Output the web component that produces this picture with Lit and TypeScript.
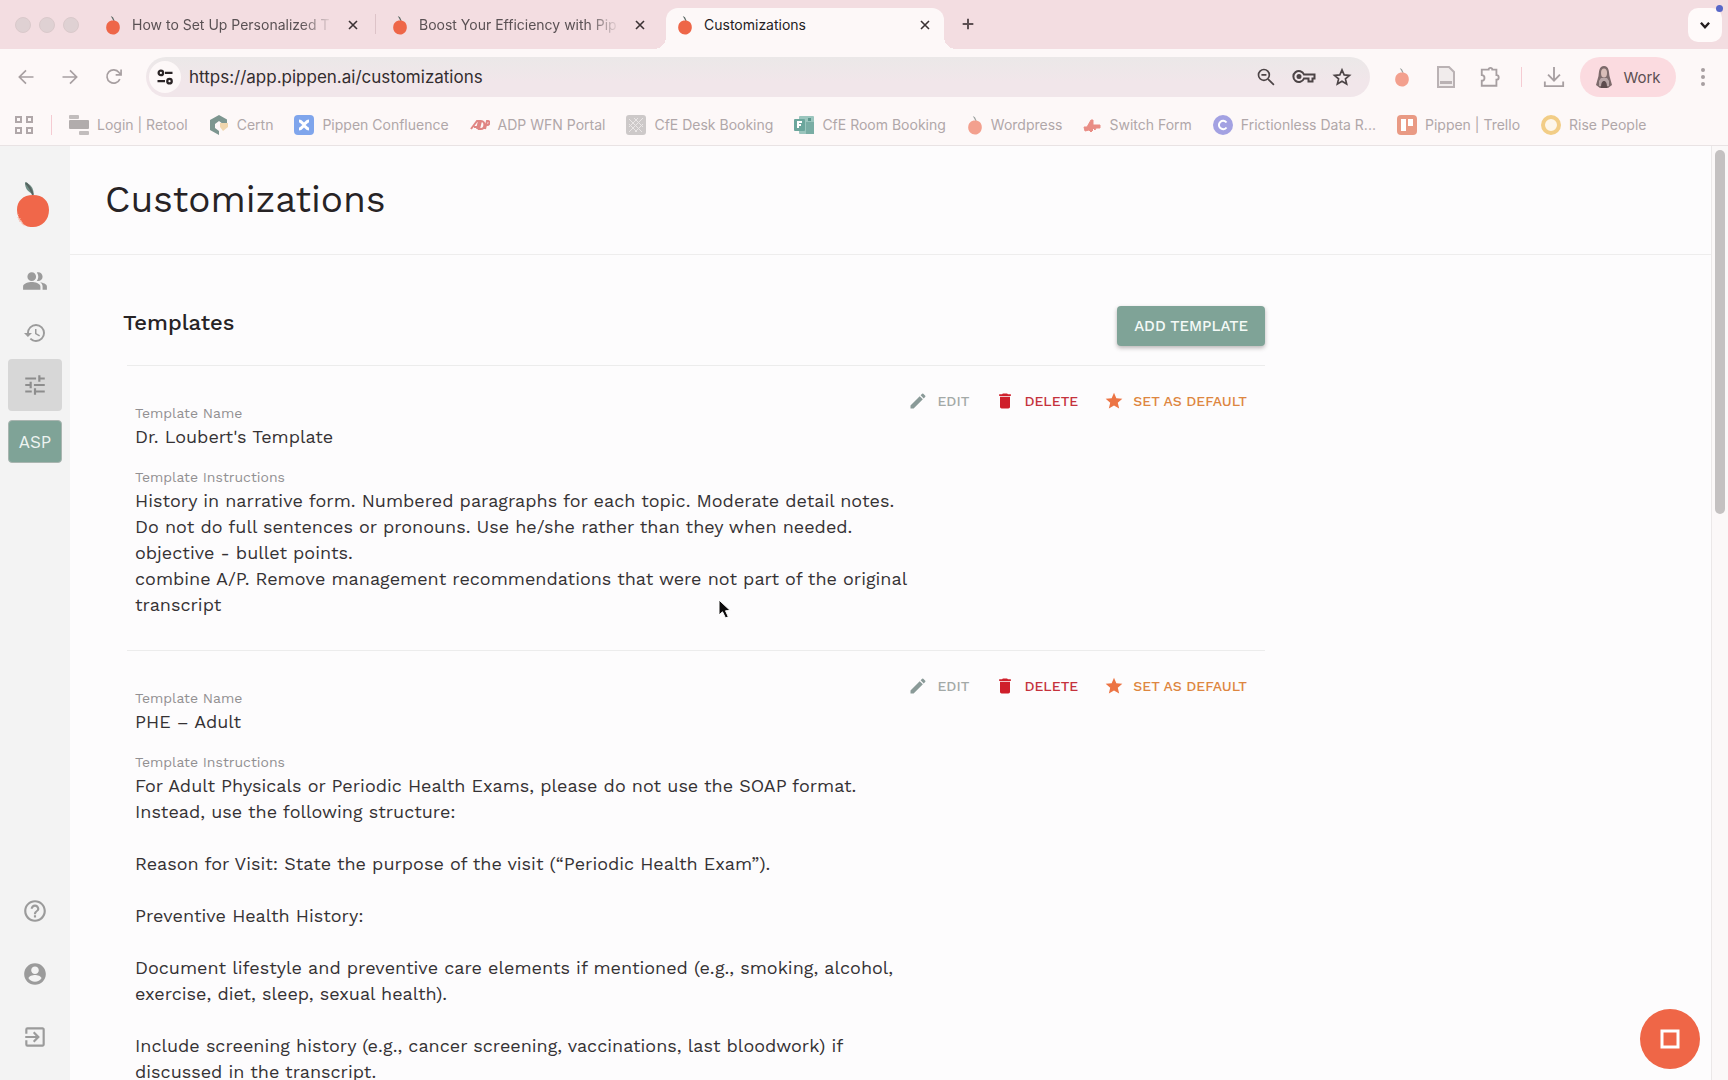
import { LitElement, html, css, svg } from "lit";
import { customElement, property } from "lit/decorators.js";

const fruit = (dim = false) => svg`
  <svg width="16" height="20" viewBox="0 0 16 20" opacity=${dim ? 0.6 : 1} aria-hidden="true">
    <path d="M8.500 6 5.800 1 8 2.200l1.600 3.600z" fill="#5d6a66"/>
    <path d="M8 5.600c4.200 0 6.800 2.600 6.800 6.600 0 4.200-3 7.300-6.800 7.300s-6.800-3-6.800-7C1.200 8.300 4 5.600 8 5.600z" fill="#ee6648"/>
  </svg>`;

const closeIcon = svg`
  <svg width="12" height="12" viewBox="0 0 12 12" aria-hidden="true">
    <path d="M2 2l8 8M10 2l-8 8" stroke="currentColor" stroke-width="1.600" fill="none"/>
  </svg>`;

const mui = (d: string, size = 24) => svg`
  <svg width=${size} height=${size} viewBox="0 0 24 24" fill="currentColor" aria-hidden="true"><path d=${d}/></svg>`;

const paths = {
  people:
    "M16.670 13.130C18.040 14.060 19 15.320 19 17v3h4v-3c0-2.180-3.570-3.470-6.330-3.870zM15 12c2.210 0 4-1.790 4-4s-1.790-4-4-4c-.47 0-.91.1-1.330.24C14.500 5.270 15 6.580 15 8s-.5 2.730-1.330 3.760c.42.14.86.24 1.330.24zM9 12c2.210 0 4-1.790 4-4s-1.790-4-4-4-4 1.790-4 4 1.790 4 4 4zm0 1c-2.670 0-8 1.340-8 4v3h16v-3c0-2.660-5.330-4-8-4z",
  history:
    "M13 3a9 9 0 0 0-9 9H1l3.890 3.890.07.14L9 12H6c0-3.870 3.130-7 7-7s7 3.130 7 7-3.130 7-7 7c-1.930 0-3.680-.79-4.940-2.060l-1.420 1.420A8.954 8.954 0 0 0 13 21a9 9 0 0 0 0-18zm-1 5v5l4.280 2.540.72-1.210-3.500-2.080V8H12z",
  tune: "M3 17v2h6v-2H3zM3 5v2h10V5H3zm10 16v-2h8v-2h-8v-2h-2v6h2zM7 9v2H3v2h4v2h2V9H7zm14 4v-2H11v2h10zm-6-4h2V7h4V5h-4V3h-2v6z",
  help: "M11 18h2v-2h-2v2zm1-16C6.480 2 2 6.480 2 12s4.480 10 10 10 10-4.480 10-10S17.520 2 12 2zm0 18c-4.410 0-8-3.590-8-8s3.590-8 8-8 8 3.590 8 8-3.590 8-8 8zm0-14c-2.210 0-4 1.790-4 4h2c0-1.100.9-2 2-2s2 .9 2 2c0 2-3 1.750-3 5h2c0-2.250 3-2.500 3-5 0-2.210-1.790-4-4-4z",
  account:
    "M12 2C6.480 2 2 6.480 2 12s4.480 10 10 10 10-4.480 10-10S17.520 2 12 2zm0 3c1.930 0 3.500 1.570 3.500 3.500S13.930 12 12 12s-3.500-1.570-3.500-3.500S10.070 5 12 5zm0 14.200c-2.500 0-4.710-1.280-6-3.220.03-1.990 4-3.080 6-3.080 1.990 0 5.970 1.090 6 3.080a7.190 7.190 0 0 1-6 3.220z",
  exit: "M10.090 15.590 11.500 17l5-5-5-5-1.410 1.410L12.670 11H3v2h9.670l-2.580 2.590zM19 3H5a2 2 0 0 0-2 2v4h2V5h14v14H5v-4H3v4a2 2 0 0 0 2 2h14c1.100 0 2-.9 2-2V5c0-1.100-.9-2-2-2z",
  edit: "M3 17.250V21h3.750L17.810 9.940l-3.750-3.750L3 17.250zM20.710 7.040a.996.996 0 0 0 0-1.410l-2.340-2.340a.996.996 0 0 0-1.410 0l-1.830 1.830 3.750 3.750 1.830-1.830z",
  trash: "M6 19c0 1.100.9 2 2 2h8c1.100 0 2-.9 2-2V7H6v12zM19 4h-3.500l-1-1h-5l-1 1H5v2h14V4z",
  star: "M12 17.270 18.180 21l-1.640-7.030L22 9.240l-7.190-.61L12 2 9.190 8.630 2 9.240l5.460 4.730L5.820 21z",
};

const line = (content: unknown, w = 24, sw = 2) => svg`
  <svg width=${w} height=${w} viewBox="0 0 24 24" fill="none" stroke="currentColor" stroke-width=${sw} aria-hidden="true">${content}</svg>`;

const bookmarkIcons: Record<string, unknown> = {
  retool: svg`<svg width="20" height="20" viewBox="0 0 20 20"><rect y="0" width="10" height="4" rx="1" fill="#c2bdbd"/><rect y="5" width="20" height="9" rx="1" fill="#b1acac"/><rect x="10" y="16" width="10" height="4" rx="1" fill="#c2bdbd"/></svg>`,
  certn: svg`<svg width="20" height="20" viewBox="0 0 20 20"><path d="M10 0 18 4.500V8l-4 1-4-3-4 3v4l4 3v4L1 15V5z" fill="#7d9690"/><path d="M11 8h8v4l-5 4-3-4z" fill="#f0d6ae"/></svg>`,
  confluence: svg`<svg width="20" height="20" viewBox="0 0 20 20"><rect width="20" height="20" rx="4" fill="#7fa5ec"/><path d="M5 6c3 0 3 3 5 3s2-3 5-3M5 14c3 0 3-3 5-3s2 3 5 3" stroke="#fff" stroke-width="3" fill="none"/></svg>`,
  adp: svg`<svg width="20" height="20" viewBox="0 0 20 20"><g fill="none" stroke="#e08583" stroke-width="2"><path d="M1 14 7 6h2l-2 8M4 12h4M11 6l-2 8h2c4 0 5-8 0-8zM15 14l2-8h1c2 0 2 4-1 4h-2"/></g></svg>`,
  desk: svg`<svg width="20" height="20" viewBox="0 0 20 20"><rect width="20" height="20" rx="3" fill="#cdc9c9"/><path d="M3 4l13 13M17 3 3 17M8 3l9 9M3 9l8 8M12 3 3 12M17 9l-8 8" stroke="#eae6e6" stroke-width="1"/></svg>`,
  room: svg`<svg width="20" height="20" viewBox="0 0 20 20"><rect x="5" y="1" width="15" height="18" rx="1" fill="#9ac5bd"/><rect x="12" y="7" width="8" height="12" fill="#79ada4"/><rect x="14" y="3" width="3" height="3" fill="#5c978d"/><rect y="4" width="11" height="12" rx="1" fill="#6ba69c"/><path d="M4 13V7h4M4 10h3" stroke="#fff" stroke-width="2" fill="none"/></svg>`,
  fruit: fruit(true),
  switch: svg`<svg width="18" height="20" viewBox="0 0 18 20"><path d="M1 12h3l4-7h2v5h7v3h-4l-1 2-2-2-1 1 1 1-2 2-2-2-4 1z" fill="#e98d85" stroke="#e98d85" stroke-width="1" stroke-linejoin="round"/></svg>`,
  frictionless: svg`<svg width="20" height="20" viewBox="0 0 20 20"><circle cx="10" cy="10" r="10" fill="#a3a1e2"/><path d="M13.500 7.500a4.200 4.200 0 1 0 0 5" stroke="#fff" stroke-width="2" fill="none"/></svg>`,
  trello: svg`<svg width="20" height="20" viewBox="0 0 20 20"><rect width="20" height="20" rx="4" fill="#e99a84"/><rect x="4" y="4" width="5" height="12" fill="#fff"/><rect x="11" y="4" width="5" height="7" fill="#fff"/></svg>`,
  rise: svg`<svg width="20" height="20" viewBox="0 0 20 20"><circle cx="10" cy="10" r="8" fill="#fdf6ea" stroke="#f2cd86" stroke-width="4"/></svg>`,
};

const bookmarks: [string, string][] = [
  ["retool", "Login | Retool"],
  ["certn", "Certn"],
  ["confluence", "Pippen Confluence"],
  ["adp", "ADP WFN Portal"],
  ["desk", "CfE Desk Booking"],
  ["room", "CfE Room Booking"],
  ["fruit", "Wordpress"],
  ["switch", "Switch Form"],
  ["frictionless", "Frictionless Data R..."],
  ["trello", "Pippen | Trello"],
  ["rise", "Rise People"],
];

const reset = css`
  * { box-sizing: border-box; }
  button, input { font: inherit; color: inherit; background: none; border: 0; padding: 0; margin: 0; }
  button { display: inline-flex; align-items: center; justify-content: center; }
  a { color: inherit; text-decoration: none; }
  svg { display: block; flex: none; }
`;

@customElement("browser-chrome")
class BrowserChrome extends LitElement {
  static styles = [reset, css`
    :host { display: block; font-family: Inter, "Liberation Sans", sans-serif; background: #fdf8f8; color: #5a5154; border-bottom: 1px solid #e9e3e4; }
    .strip { display: flex; align-items: flex-end; height: 49px; background: #f3dde1; padding: 0 6px 0 15px; }
    .lights { display: flex; gap: 8px; padding-bottom: 16px; width: 66px; margin-right: 8px; }
    .light { width: 16px; height: 16px; border-radius: 50%; background: #dfd1d3; border: 1px solid #dac9cb; }
    .tab { display: flex; align-items: center; height: 41px; padding: 0 14px 0 16px; position: relative; }
    .tab svg { margin-bottom: 7px; }
    .tab .close svg { margin: 0; }
    .title { display: block; flex: 1; text-align: left; font-size: 14px; line-height: 20px; white-space: nowrap; margin: 0 12px 8px 11px; }
    .fade { -webkit-mask-image: linear-gradient(90deg, #000 84%, transparent); mask-image: linear-gradient(90deg, #000 84%, transparent); }
    .close { margin-bottom: 8px; height: 20px; width: 16px; color: #3b3234; }
    .wide { width: 286px; }
    .rule { width: 1px; height: 20px; background: #ddc3c8; margin-bottom: 15px; }
    .active { width: 278px; background: #fdf8f8; border-radius: 12px 12px 0 0; padding: 0 11px; margin-left: 4px; color: #241d1f; }
    .active::before, .active::after { content: ""; position: absolute; bottom: 0; width: 12px; height: 12px; }
    .active::before { left: -12px; background: radial-gradient(circle at 0 0, transparent 12px, #fdf8f8 12px); }
    .active::after { right: -12px; background: radial-gradient(circle at 100% 0, transparent 12px, #fdf8f8 12px); }
    .plus { height: 49px; width: 48px; color: #5d5053; padding-bottom: 1px; }
    .grow { flex: 1; }
    .down { width: 34px; height: 34px; border-radius: 10px; background: #fffafa; color: #231c1e; margin-bottom: 7px; position: relative; }
    .down::after { content: ""; position: absolute; right: -1px; top: -3px; width: 7px; height: 7px; border-radius: 50%; background: #5867c8; }
    .bar { display: flex; align-items: center; height: 56px; padding: 0 13px; color: #a79fa1; }
    .nav { display: flex; gap: 18px; margin-right: 19px; }
    .nav button { width: 26px; height: 26px; }
    .address { flex: 1; display: flex; align-items: center; height: 40px; border-radius: 20px; background: linear-gradient(#ebe8e8, #f1e6ea 60%); padding: 0 16px 0 3px; gap: 8px; color: #4c4446; }
    .site { width: 32px; height: 32px; border-radius: 50%; background: #fdf8f8; color: #2b2426; }
    .url { flex: 1; min-width: 0; font-size: 17px; line-height: 24px; color: #332d2f; outline: none; }
    .inside { display: flex; gap: 14px; }
    .inside button { width: 24px; height: 24px; }
    .ext { display: flex; align-items: center; gap: 20px; margin-left: 20px; }
    .ext button { width: 24px; height: 24px; }
    .ext .pinkrule { margin: 0 0 0 -1px; }
    .pinkrule { width: 1px; height: 20px; background: #f5cbd2; }
    .ext .work { width: 96px; height: 40px; border-radius: 20px; background: #fbdbe0; gap: 10px; color: #5c5052; font-size: 15px; margin-left: -6px; margin-right: -5px; }
    .marks { display: flex; align-items: center; height: 40px; padding: 0 15px; font-size: 14px; line-height: 20px; color: #b0a7a9; white-space: nowrap; }
    .marks .pinkrule { margin: 0 17px 0 18px; }
    .links { display: flex; gap: 21px; }
    .link { display: flex; align-items: center; gap: 8px; }
  `];

  tab(title: string, cls: string, fade: boolean) {
    return html`
      <div class="tab ${cls}">
        ${fruit()}
        <button class="title ${fade ? "fade" : ""}" role="tab" aria-selected=${cls === "active" ? "true" : "false"}>${title}</button>
        <button class="close" aria-label="Close tab">${closeIcon}</button>
      </div>`;
  }

  render() {
    return html`
      <div class="strip" role="tablist">
        <div class="lights"><span class="light"></span><span class="light"></span><span class="light"></span></div>
        ${this.tab("How to Set Up Personalized T", "wide", true)}
        <span class="rule"></span>
        ${this.tab("Boost Your Efficiency with Pip", "wide", true)}
        ${this.tab("Customizations", "active", false)}
        <button class="plus" aria-label="New tab">${line(svg`<path d="M12 4v16M4 12h16"/>`, 16, 3)}</button>
        <span class="grow"></span>
        <button class="down" aria-label="Search tabs">${line(svg`<path d="M5 8l7 8 7-8"/>`, 14, 4)}</button>
      </div>
      <div class="bar">
        <div class="nav">
          <button aria-label="Back">${line(svg`<path d="M21 12H5M12 4l-8 8 8 8"/>`, 20)}</button>
          <button aria-label="Forward">${line(svg`<path d="M3 12h16M12 4l8 8-8 8"/>`, 20)}</button>
          <button aria-label="Reload">${line(svg`<path d="M19 14.500A8 8 0 1 1 18 6.500l2 2.500M20.500 3v6.500H14"/>`, 20)}</button>
        </div>
        <div class="address">
          <button class="site" aria-label="Site settings">${line(svg`<circle cx="6.500" cy="6.500" r="3"/><path d="M12 6.500h10M2 17.500h10"/><circle cx="18" cy="17.500" r="3"/>`, 18, 3)}</button>
          <input class="url" aria-label="Address" .value=${"https://app.pippen.ai/customizations"} />
          <div class="inside">
            <button aria-label="Zoom">${line(svg`<circle cx="9.500" cy="9.500" r="6.500"/><path d="M14.500 14.500 21.500 21.500M6.500 9.500h6"/>`, 20, 2)}</button>
            <button aria-label="Passwords">${line(svg`<path d="M12 9.500h10.500v4h-2v3h-4v-3H12a5.500 5.500 0 1 1 0-4z"/><circle cx="7" cy="11.500" r="1.500" fill="currentColor"/>`, 24, 2)}</button>
            <button aria-label="Bookmark">${line(svg`<path d="M12 3.500l2.600 6 6.400.5-4.900 4.200 1.500 6.300L12 17.100l-5.600 3.400 1.500-6.300L3 10l6.400-.5z"/>`, 20, 2)}</button>
          </div>
        </div>
        <div class="ext">
          <button aria-label="Pippen extension">${fruit(true)}</button>
          <button aria-label="Document extension">${svg`<svg width="20" height="22" viewBox="0 0 20 22"><path d="M2 1h11l5 5v15H2z" fill="#f1ecec" stroke="#bab2b4" stroke-width="2"/><path d="M4 16.500h12" stroke="#bab2b4" stroke-width="3"/></svg>`}</button>
          <button aria-label="Extensions">${line(svg`<path d="M3 4h7.500a2 2 0 0 1 4 0H19v6a2.500 2.500 0 0 1 0 5v6.500H3V16c4 0 4-6 0-6z"/>`, 22)}</button>
          <span class="pinkrule"></span>
          <button aria-label="Downloads">${line(svg`<path d="M12 1v14M5.500 9.500 12 16l6.500-6.500M2 17v5h20v-5"/>`, 22)}</button>
          <button class="work">
            ${svg`<svg width="18" height="22" viewBox="0 0 18 22" aria-hidden="true"><path d="M9 0C4 0 4 6 3.500 10L1 19l4 3h8l4-3-2.500-9C14 6 14 0 9 0z" fill="#7d6a6b"/><path d="M4 15l2-3h6l2 3v5H4z" fill="#b9a6a7"/><ellipse cx="9" cy="7" rx="3" ry="4.500" fill="#d9bdb8"/><path d="M6 22c0-5 1-7 3-7s3 2 3 7z" fill="#5c4b4d"/></svg>`}
            Work
          </button>
          <button aria-label="Menu">${svg`<svg width="4" height="20" viewBox="0 0 4 20" fill="#a79fa1"><circle cx="2" cy="3" r="2"/><circle cx="2" cy="10" r="2"/><circle cx="2" cy="17" r="2"/></svg>`}</button>
        </div>
      </div>
      <nav class="marks" aria-label="Bookmarks">
        <button aria-label="Apps">${svg`<svg width="18" height="18" viewBox="0 0 18 18" fill="none" stroke="#b0a7a9" stroke-width="2"><rect x="1" y="1" width="5" height="5"/><rect x="12" y="1" width="5" height="5"/><rect x="1" y="12" width="5" height="5"/><rect x="12" y="12" width="5" height="5"/></svg>`}</button>
        <span class="pinkrule"></span>
        <div class="links">
          ${bookmarks.map(([icon, label]) => html`<a class="link" href="#">${bookmarkIcons[icon]}${label}</a>`)}
        </div>
      </nav>`;
  }
}

@customElement("side-nav")
class SideNav extends LitElement {
  static styles = [reset, css`
    :host { display: flex; flex-direction: column; align-items: center; width: 70px; background: #f3f3f3; color: #9b9b9b; font-family: "Work Sans", Inter, sans-serif; padding: 35px 0 31px; }
    .logo { margin: 0 5px 27px 0; }
    .item { width: 54px; height: 52px; border-radius: 4px; }
    .current { background: #d7d7d7; color: #8d8d8d; }
    .team { width: 54px; height: 43px; border-radius: 4px; background: #7fa397; color: #eef4f1; font-size: 17px; margin-top: 9px; border: 1px solid #a9b5b0; }
    .grow { flex: 1; }
    .foot { display: flex; flex-direction: column; gap: 39px; }
    .foot button { width: 54px; height: 24px; }
  `];

  render() {
    return html`
      <a class="logo" href="#" aria-label="Pippen">
        ${svg`<svg width="34" height="47" viewBox="0 0 34 47"><path d="M9 1c5 2 9 6 8.500 12-5-1-9-6-8.500-12z" fill="#6f8d85"/><path d="M10 2c3 3 5 6 7 12" stroke="#56635f" stroke-width="2" fill="none"/><path d="M17 14c10 0 16 6 16 15 0 10-7 17-16 17-3 0-8 0-11-5C3 38 1 34 1 29c0-9 6-15 16-15z" fill="#f0674a"/><path d="M2 33c1 6 3 9 7 12M4 37l3 7M2 36l2 5" stroke="#f6a794" stroke-width="1" stroke-dasharray="1 1" fill="none"/></svg>`}
      </a>
      <button class="item" aria-label="Patients">${mui(paths.people, 26)}</button>
      <button class="item" aria-label="History">${mui(paths.history, 24)}</button>
      <button class="item current" aria-label="Customizations">${mui(paths.tune, 26)}</button>
      <button class="team">ASP</button>
      <span class="grow"></span>
      <div class="foot">
        <button aria-label="Help">${mui(paths.help, 26)}</button>
        <button aria-label="Account">${mui(paths.account, 26)}</button>
        <button aria-label="Sign out">${mui(paths.exit, 26)}</button>
      </div>`;
  }
}

@customElement("template-card")
class TemplateCard extends LitElement {
  static styles = [reset, css`
    :host { display: flex; justify-content: space-between; align-items: flex-start; margin-left: 4px; padding: 22px 12px 32px 8px; border-top: 1px solid #ececec; }
    .fields { flex: 0 1 776px; margin: 16px 0 0; }
    .label { font-size: 14px; line-height: 18px; color: #929092; }
    .value { margin: 0 0 18px; font-size: 18px; line-height: 26px; color: #353234; white-space: pre-line; padding-top: 2px; }
    .value:last-child { margin-bottom: 0; }
    .actions { display: flex; gap: 26px; font-size: 14px; font-weight: 500; line-height: 24px; padding: 1px 6px 0 0; }
    .action { gap: 9px; text-transform: uppercase; white-space: nowrap; }
    .edit { color: #a3a9a7; }
    .delete { color: #c5323c; }
    .default { color: #dd8640; }
    .edit svg { color: #8a9a98; }
    .delete svg { color: #cf1f2b; }
    .default svg { color: #ec7444; }
  `];

  @property() name = "";
  @property() instructions = "";

  render() {
    return html`
      <dl class="fields">
        <dt class="label">Template Name</dt>
        <dd class="value">${this.name}</dd>
        <dt class="label">Template Instructions</dt>
        <dd class="value">${this.instructions}</dd>
      </dl>
      <div class="actions">
        <button class="action edit">${mui(paths.edit, 20)}Edit</button>
        <button class="action delete">${mui(paths.trash, 20)}Delete</button>
        <button class="action default">${mui(paths.star, 20)}Set as default</button>
      </div>`;
  }
}

const templates = [
  {
    name: "Dr. Loubert's Template",
    instructions: `History in narrative form. Numbered paragraphs for each topic. Moderate detail notes. Do not do full sentences or pronouns. Use he/she rather than they when needed.
objective - bullet points.
combine A/P. Remove management recommendations that were not part of the original transcript`,
  },
  {
    name: "PHE – Adult",
    instructions: `For Adult Physicals or Periodic Health Exams, please do not use the SOAP format. Instead, use the following structure:

Reason for Visit: State the purpose of the visit (“Periodic Health Exam”).

Preventive Health History:

Document lifestyle and preventive care elements if mentioned (e.g., smoking, alcohol, exercise, diet, sleep, sexual health).

Include screening history (e.g., cancer screening, vaccinations, last bloodwork) if discussed in the transcript.`,
  },
];

@customElement("app-root")
class AppRoot extends LitElement {
  static styles = [reset, css`
    :host { display: flex; flex-direction: column; height: 100vh; overflow: hidden; position: relative; background: #fdfcfd; font-family: "Work Sans", Inter, "Liberation Sans", sans-serif; color: #272325; }
    .page { flex: 1; min-height: 0; display: flex; }
    .main { flex: 1; min-width: 0; overflow: hidden; }
    .head { height: 109px; display: flex; align-items: center; padding: 0 36px 0 35px; border-bottom: 1px solid #eeeded; }
    .title { margin: 0; font-size: 37px; line-height: 44px; font-weight: 400; }
    .body { padding: 51px 53px 0; max-width: 1248px; }
    .top { display: flex; justify-content: space-between; align-items: flex-start; height: 59px; }
    .section { margin: 3px 0 0; font-size: 22px; line-height: 28px; font-weight: 500; }
    .add { height: 40px; padding: 0 17px; border-radius: 4px; background: #7fa397; color: #f4faf7; font-size: 15px; font-weight: 500; text-transform: uppercase; box-shadow: 0 2px 4px rgba(60, 50, 50, 0.35); }
    .scroll { width: 17px; background: #fbf8f8; border-left: 1px solid #ebe8e8; padding: 4px 3px; }
    .thumb { height: 364px; border-radius: 5px; background: #c4c1c1; width: 10px; }
    .record { position: absolute; right: 28px; bottom: 11px; width: 60px; height: 60px; border-radius: 50%; background: #ef6647; }
    .pointer { position: absolute; left: 718px; top: 599px; }
  `];

  render() {
    return html`
      <browser-chrome></browser-chrome>
      <div class="page">
        <side-nav></side-nav>
        <main class="main">
          <header class="head"><h1 class="title">Customizations</h1></header>
          <section class="body">
            <div class="top">
              <h2 class="section">Templates</h2>
              <button class="add">Add template</button>
            </div>
            ${templates.map((t) => html`<template-card .name=${t.name} .instructions=${t.instructions}></template-card>`)}
          </section>
        </main>
        <div class="scroll"><div class="thumb"></div></div>
      </div>
      <button class="record" aria-label="Stop recording">
        ${svg`<svg width="20" height="20" viewBox="0 0 20 20" fill="none"><rect x="2" y="2" width="16" height="16" stroke="#fff" stroke-width="3"/></svg>`}
      </button>
      <svg class="pointer" width="16" height="22" viewBox="0 0 16 22" aria-hidden="true">
        <path d="M1 1v15l3.500-3.200L7.500 19l2.800-1.200-2.800-6 4.700-.3z" fill="#0c0a0b" stroke="#fff" stroke-width="1"/>
      </svg>`;
  }
}
